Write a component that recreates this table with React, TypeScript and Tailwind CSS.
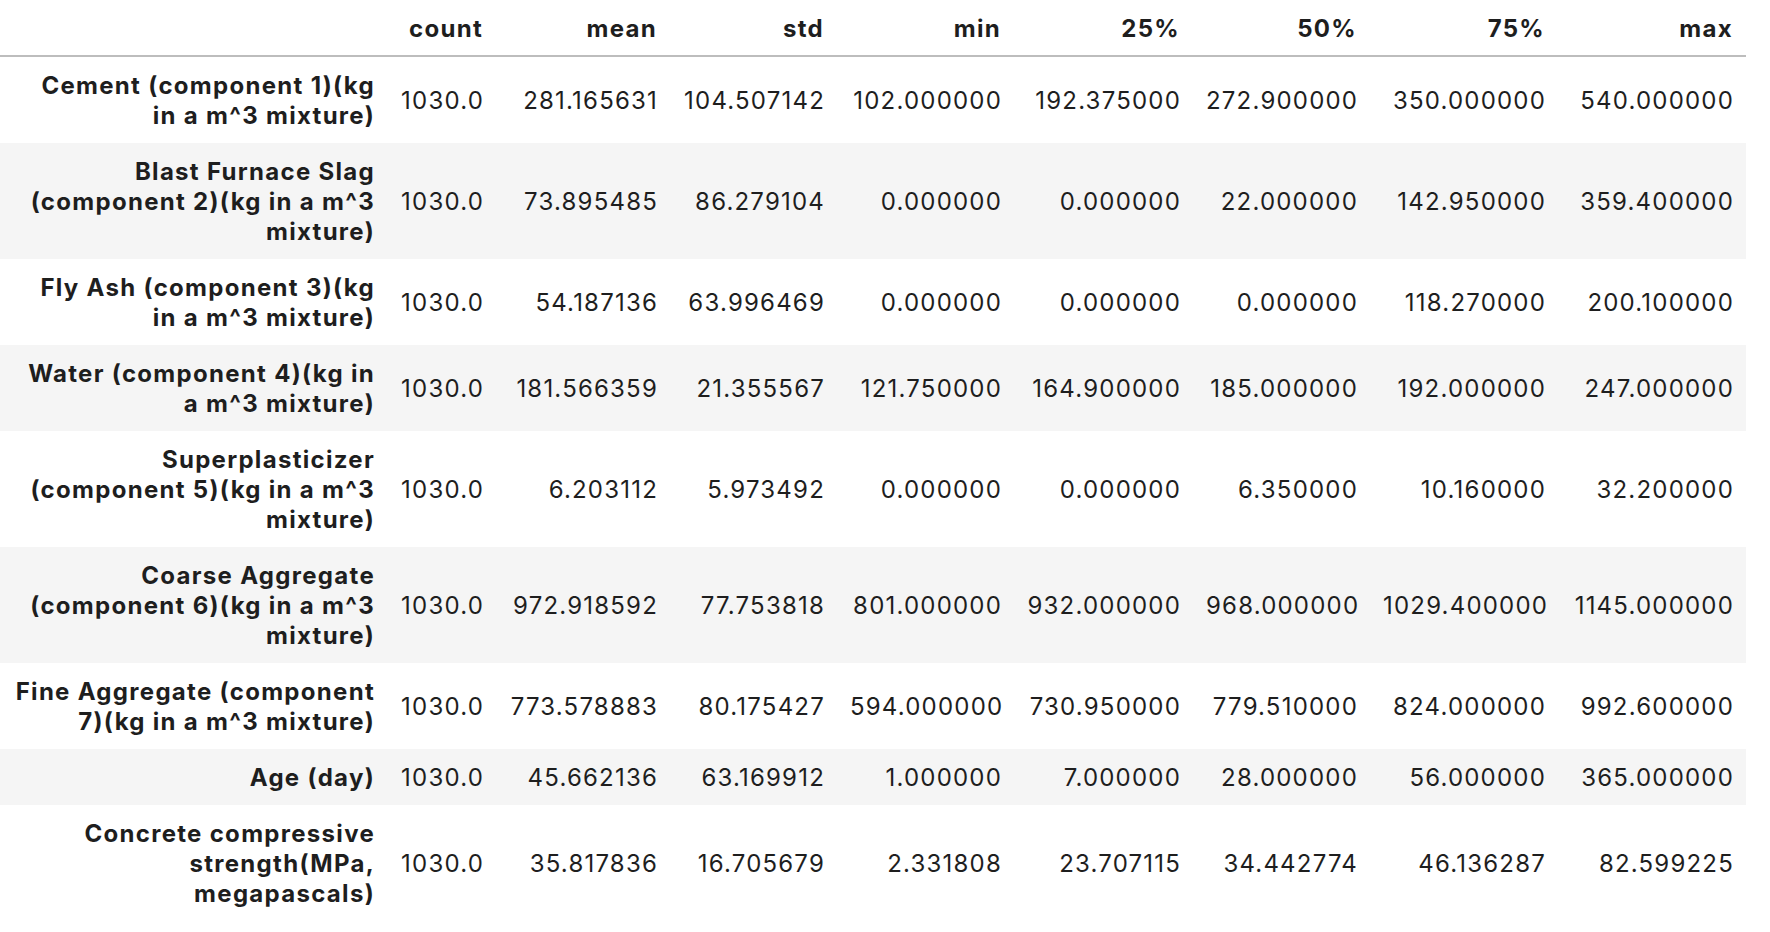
import React from "react";

const cols = ["count", "mean", "std", "min", "25%", "50%", "75%", "max"];
const widths = [388, 108, 174, 167, 177, 179, 177, 188, 188];

const rows: [string, string[]][] = [
  ["Cement (component 1)(kg in a m^3 mixture)", ["1030.0", "281.165631", "104.507142", "102.000000", "192.375000", "272.900000", "350.000000", "540.000000"]],
  ["Blast Furnace Slag (component 2)(kg in a m^3 mixture)", ["1030.0", "73.895485", "86.279104", "0.000000", "0.000000", "22.000000", "142.950000", "359.400000"]],
  ["Fly Ash (component 3)(kg in a m^3 mixture)", ["1030.0", "54.187136", "63.996469", "0.000000", "0.000000", "0.000000", "118.270000", "200.100000"]],
  ["Water (component 4)(kg in a m^3 mixture)", ["1030.0", "181.566359", "21.355567", "121.750000", "164.900000", "185.000000", "192.000000", "247.000000"]],
  ["Superplasticizer (component 5)(kg in a m^3 mixture)", ["1030.0", "6.203112", "5.973492", "0.000000", "0.000000", "6.350000", "10.160000", "32.200000"]],
  ["Coarse Aggregate (component 6)(kg in a m^3 mixture)", ["1030.0", "972.918592", "77.753818", "801.000000", "932.000000", "968.000000", "1029.400000", "1145.000000"]],
  ["Fine Aggregate (component 7)(kg in a m^3 mixture)", ["1030.0", "773.578883", "80.175427", "594.000000", "730.950000", "779.510000", "824.000000", "992.600000"]],
  ["Age (day)", ["1030.0", "45.662136", "63.169912", "1.000000", "7.000000", "28.000000", "56.000000", "365.000000"]],
  ["Concrete compressive strength(MPa, megapascals)", ["1030.0", "35.817836", "16.705679", "2.331808", "23.707115", "34.442774", "46.136287", "82.599225"]],
];

export default function App() {
  return (
    <div
      className="w-[1770px] h-[932px] bg-white overflow-hidden text-[#1e1e1e]"
      style={{ fontFamily: "Inter, 'Noto Sans', sans-serif" }}
    >
      <table className="table-fixed border-collapse w-[1746px] text-[24px] leading-[30px]">
        <colgroup>
          {widths.map((w, i) => (
            <col key={i} style={{ width: w }} />
          ))}
        </colgroup>
        <thead>
          <tr className="border-b-2 border-[#bdbdbd]">
            <th className="px-[13px] pt-[14px] pb-[11px]"></th>
            {cols.map((c) => (
              <th
                key={c}
                className="px-[13px] pt-[14px] pb-[11px] text-right font-bold whitespace-nowrap tracking-[1.3px]"
              >
                {c}
              </th>
            ))}
          </tr>
        </thead>
        <tbody>
          {rows.map(([label, vals], i) => (
            <tr key={label} className={i % 2 === 1 ? "bg-[#f5f5f5]" : "bg-white"}>
              <th className="px-[13px] pt-[14px] pb-[12px] text-right font-bold align-middle tracking-[1.3px]">
                {label}
              </th>
              {vals.map((v, j) => (
                <td
                  key={j}
                  className="pl-[13px] pr-[12px] pt-[14px] pb-[12px] text-right align-middle whitespace-nowrap tracking-[1.2px]"
                >
                  {v}
                </td>
              ))}
            </tr>
          ))}
        </tbody>
      </table>
    </div>
  );
}
